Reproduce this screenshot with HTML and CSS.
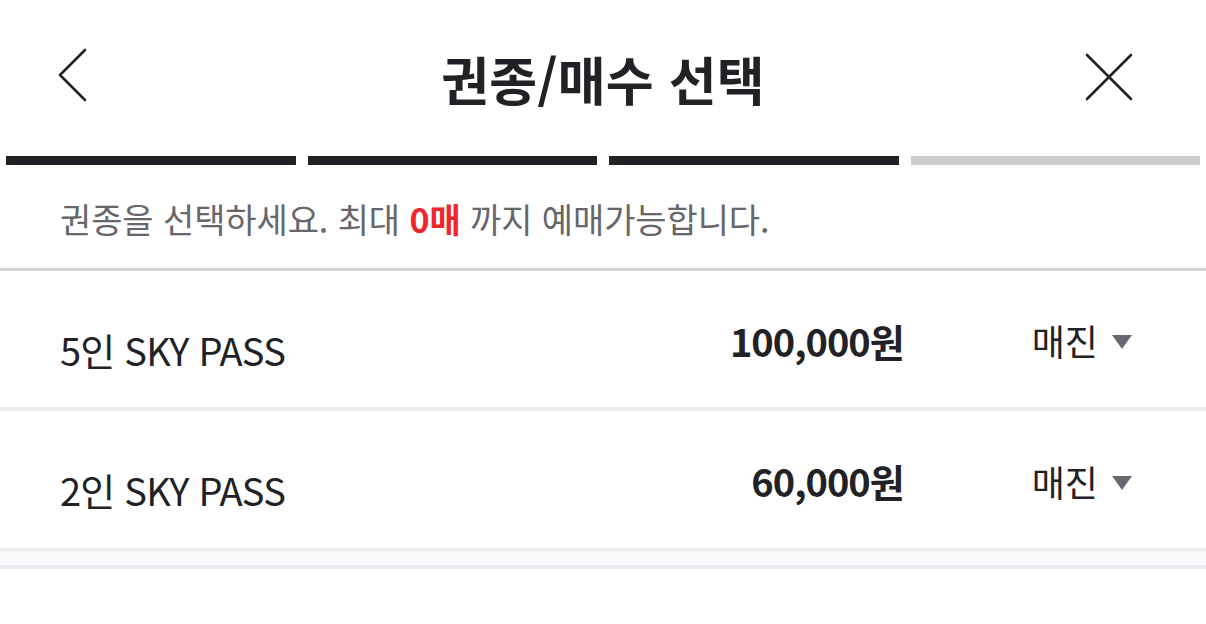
FILE: index.html
```html
<!DOCTYPE html>
<html lang="ko">
<head>
<meta charset="utf-8">
<link rel="stylesheet" href="styles.css">
</head>
<body>
<div class="page">
  <header class="header">
    <button class="icon-btn back" aria-label="뒤로">
      <svg width="40" height="60" viewBox="0 0 40 60"><polyline points="27,3 2,28 27,53" fill="none" stroke="#222226" stroke-width="2.6" stroke-linecap="round" stroke-linejoin="round"/></svg>
    </button>
    <h1 class="title">권종/매수 선택</h1>
    <button class="icon-btn close" aria-label="닫기">
      <svg width="50" height="50" viewBox="0 0 50 50"><path d="M3 3 L47 47 M47 3 L3 47" fill="none" stroke="#222226" stroke-width="2.6" stroke-linecap="round"/></svg>
    </button>
  </header>
  <div class="steps">
    <span class="step on"></span>
    <span class="step on"></span>
    <span class="step on"></span>
    <span class="step"></span>
  </div>
  <p class="notice">권종을 선택하세요. 최대 <strong class="red">0매</strong> 까지 예매가능합니다.</p>
  <ul class="list">
    <li class="row">
      <span class="name">5인 SKY PASS</span>
      <span class="price">100,000원</span>
      <span class="status">매진<i class="caret"></i></span>
    </li>
    <li class="row">
      <span class="name">2인 SKY PASS</span>
      <span class="price">60,000원</span>
      <span class="status">매진<i class="caret"></i></span>
    </li>
  </ul>
  <div class="band"></div>
</div>
</body>
</html>
```
FILE: styles.css
```css
* { box-sizing: border-box; }
html, body { margin: 0; padding: 0; background: #fff; }
body {
  font-family: "Noto Sans CJK KR", "Noto Sans", sans-serif;
  color: #222226;
  width: 1206px;
  height: 624px;
  overflow: hidden;
}
.header {
  height: 156px;
  display: flex;
  align-items: center;
  justify-content: space-between;
  padding: 0 72px 0 58px;
}
.icon-btn {
  border: 0;
  background: none;
  padding: 0;
  display: flex;
  align-items: center;
  justify-content: center;
}
.back { margin-top: -3px; }
.close { margin-top: -2px; }
.title {
  margin: 0;
  font-size: 52px;
  font-weight: 700;
  letter-spacing: 0.2px;
  line-height: 1;
  flex: 1;
  text-align: center;
  padding-left: 24px;
  margin-top: 2px;
}
.steps {
  display: flex;
  gap: 12px;
  padding: 0 6px;
  height: 9px;
}
.step { flex: 1; background: #cccccc; }
.step.on { background: #222226; }
.notice {
  margin: 0;
  height: 106px;
  display: flex;
  align-items: center;
  padding: 3px 60px 0;
  font-size: 34px;
  color: #66666b;
  letter-spacing: -0.1px;
  white-space: pre;
  border-bottom: 3px solid #d2d2d8;
}
.red { color: #f0262c; font-weight: 700; }
.list { list-style: none; margin: 0; padding: 0; }
.row {
  height: 140px;
  display: flex;
  align-items: center;
  padding: 0 74px 0 60px;
  border-bottom: 4px solid #ebebf0;
}
.name {
  flex: 1;
  font-size: 38px;
  letter-spacing: -0.8px;
  margin-top: 20px;
}
.price {
  font-size: 38px;
  font-weight: 700;
  letter-spacing: -1px;
  margin-top: 2px;
}
.status {
  margin-left: 128px;
  display: flex;
  align-items: center;
  font-size: 36px;
  margin-top: 2px;
}
.caret {
  display: inline-block;
  width: 0;
  height: 0;
  border-left: 10px solid transparent;
  border-right: 10px solid transparent;
  border-top: 14px solid #666a70;
  margin-left: 14px;
  margin-top: 4px;
}
.list .row:last-child { border-bottom-width: 3px; }
.band {
  height: 18px;
  background: #f7f8fa;
  border-bottom: 4px solid #ebebf0;
}
```
